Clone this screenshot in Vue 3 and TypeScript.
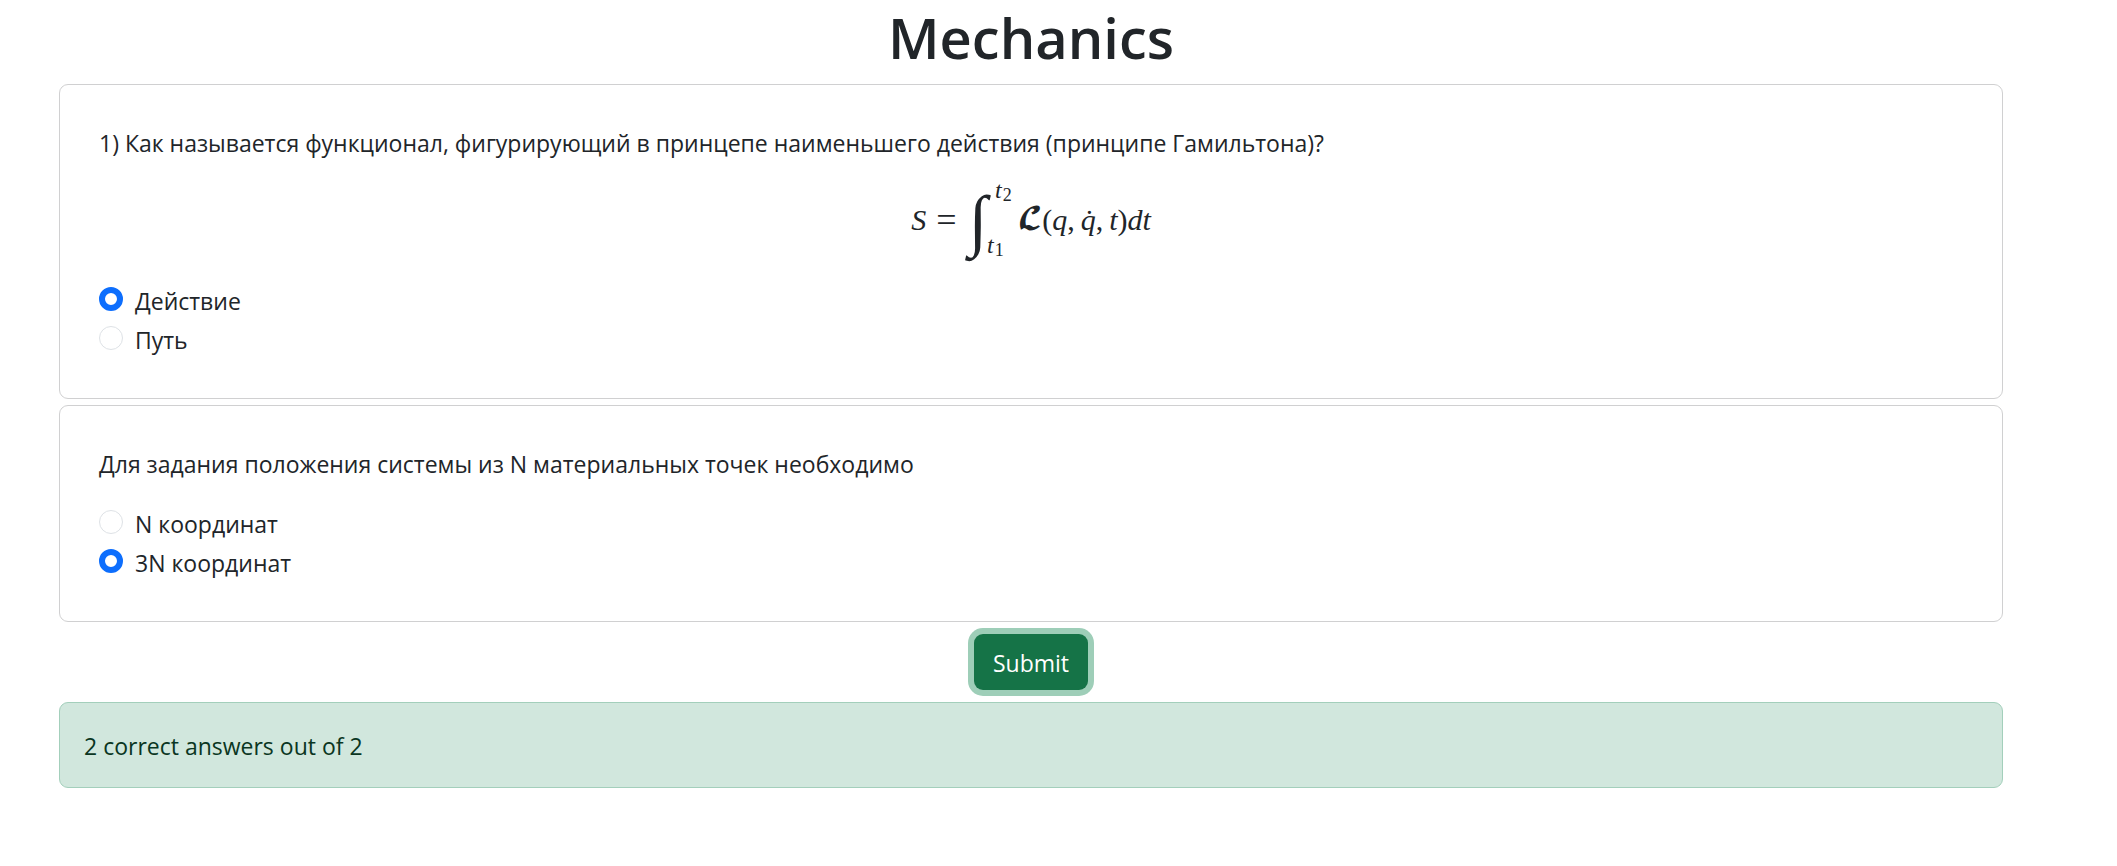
<script setup lang="ts">
import { computed, reactive, ref } from 'vue'

interface Question {
  id: string
  text: string
  hasFormula: boolean
  options: string[]
  correct: number
}

const questions: Question[] = [
  {
    id: 'q1',
    text: '1) Как называется функционал, фигурирующий в принцепе наименьшего действия (принципе Гамильтона)?',
    hasFormula: true,
    options: ['Действие', 'Путь'],
    correct: 0,
  },
  {
    id: 'q2',
    text: 'Для задания положения системы из N материальных точек необходимо',
    hasFormula: false,
    options: ['N координат', '3N координат'],
    correct: 1,
  },
]

const answers = reactive<Record<string, number>>({ q1: 0, q2: 1 })
const countCorrect = () => questions.filter((q) => answers[q.id] === q.correct).length
const score = ref(countCorrect())
const message = computed(() => `${score.value} correct answers out of ${questions.length}`)

function submit() {
  score.value = countCorrect()
}
</script>

<template>
  <main class="page">
    <h1 class="title">Mechanics</h1>
    <form class="quiz" @submit.prevent="submit">
      <fieldset v-for="q in questions" :key="q.id" class="card" :aria-labelledby="`${q.id}-text`">
        <p :id="`${q.id}-text`" class="question">{{ q.text }}</p>
        <div v-if="q.hasFormula" class="formula">
          <i class="symbol">S</i>
          <span class="equals">=</span>
          <span class="integral">
            <span class="sign">∫</span>
            <span class="limits">
              <span class="limit upper"><i>t</i><small>2</small></span>
              <span class="limit"><i>t</i><small>1</small></span>
            </span>
          </span>
          <span class="script">𝓛</span>
          <span>(</span><i>q</i><span class="comma">,</span>
          <i>q̇</i><span class="comma">,</span>
          <i>t</i><span>)</span><i>dt</i>
        </div>
        <div class="options">
          <label v-for="(option, i) in q.options" :key="option" class="option">
            <input v-model="answers[q.id]" class="radio" type="radio" :name="q.id" :value="i" />
            <span>{{ option }}</span>
          </label>
        </div>
      </fieldset>
      <button class="submit" type="submit">Submit</button>
    </form>
    <div class="alert" role="status">{{ message }}</div>
  </main>
</template>

<style>
body {
  margin: 0;
  background: #fff;
}
</style>

<style scoped>
.page {
  box-sizing: border-box;
  padding: 2px 114px 24px 59px;
  color: #212529;
  font-family: "Segoe UI", "Open Sans", "Noto Sans", sans-serif;
  font-size: 23px;
  line-height: 36px;
}
.title {
  margin: 0 0 12px;
  font-size: 56px;
  font-weight: 600;
  line-height: 70px;
  text-align: center;
}
.quiz {
  display: flex;
  flex-direction: column;
  gap: 6px;
}
.card {
  box-sizing: border-box;
  min-width: 0;
  margin: 0;
  padding: 40px 39px 39px;
  border: 1px solid #d0d0d1;
  border-radius: 9px;
}
.question {
  margin: 0 0 22px;
}
.formula {
  display: flex;
  align-items: center;
  justify-content: center;
  height: 74px;
  margin-bottom: 24px;
  font-family: "Liberation Serif", serif;
  font-size: 30px;
  line-height: 36px;
}
.equals {
  margin: 0 12px 0 10px;
  font-size: 36px;
}
.integral {
  display: flex;
  align-items: center;
}
.sign {
  font-size: 68px;
  font-style: italic;
  line-height: 72px;
}
.limits {
  display: flex;
  flex-direction: column;
  justify-content: space-between;
  height: 80px;
  margin-right: 6px;
}
.limit {
  font-size: 24px;
  line-height: 20px;
}
.upper {
  margin-left: 8px;
}
.limit small {
  margin-left: 1px;
  font-size: 18px;
  vertical-align: -3px;
}
.script {
  font-family: "DejaVu Math TeX Gyre", "DejaVu Serif", serif;
  font-size: 28px;
}
.comma {
  margin-right: 6px;
}
.option {
  display: flex;
  align-items: flex-start;
  gap: 12px;
  width: fit-content;
  height: 39px;
  line-height: 40px;
}
.radio {
  appearance: none;
  box-sizing: border-box;
  width: 24px;
  height: 24px;
  margin: 6px 0 0;
  border: 1px solid #dee2e6;
  border-radius: 50%;
  background: #fff;
}
.radio:checked {
  border: 6px solid #0d6efd;
}
.submit {
  align-self: center;
  margin-top: 6px;
  padding: 11px 19px 9px;
  border: 0;
  border-radius: 9px;
  background: #157347;
  box-shadow: 0 0 0 6px #9eceb8;
  color: #fff;
  font: inherit;
}
.alert {
  margin-top: 12px;
  padding: 25px 24px 23px;
  border: 1px solid #a3cfbb;
  border-radius: 9px;
  background: #d1e7dd;
  color: #0a3622;
}
</style>
